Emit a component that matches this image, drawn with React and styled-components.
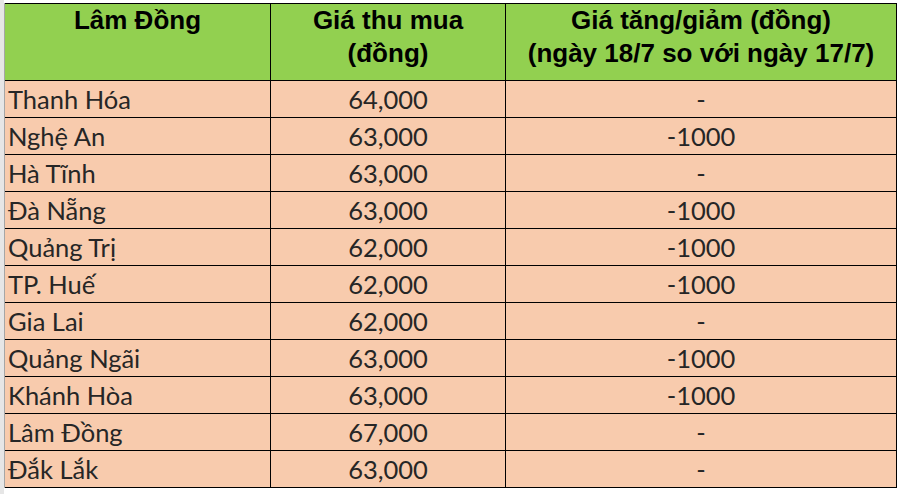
import React from 'react';
import styled, { createGlobalStyle } from 'styled-components';

const Global = createGlobalStyle`
  html, body { margin: 0; padding: 0; background: #fff; }
  body { width: 900px; height: 494px; overflow: hidden; }
`;

const Sheet = styled.div`
  display: flex;
  align-items: flex-start;
  height: 494px;
  background: #fff;
`;

const Gutter = styled.div`
  width: 4px;
  flex: none;
  align-self: stretch;
  background: #e6e6e6;
`;

const Grid = styled.div`
  margin-top: 3px;
  display: grid;
  grid-template-columns: 265px 234px 390px;
  grid-template-rows: 76px repeat(11, 36px);
  gap: 1px;
  padding: 1px 1px 1px 0;
  background: #000;
  border-left: 1px solid #a6a6a6;
`;

const Head = styled.div`
  background: #92d050;
  text-align: center;
  font-family: 'Liberation Sans', Arial, sans-serif;
  font-size: 26px;
  font-weight: 700;
  line-height: 33px;
  color: #000;
  white-space: nowrap;
  overflow: hidden;
`;

const Cell = styled.div`
  display: flex;
  align-items: center;
  justify-content: ${p => (p.$center ? 'center' : 'flex-start')};
  padding: 0 3px;
  background: #f8cbad;
  font-family: Lato, 'Open Sans', sans-serif;
  font-size: 25.5px;
  line-height: 32px;
  color: #262626;
  white-space: nowrap;
  overflow: hidden;
`;

const rows = [
  ['Thanh Hóa', '64,000', '-'],
  ['Nghệ An', '63,000', '-1000'],
  ['Hà Tĩnh', '63,000', '-'],
  ['Đà Nẵng', '63,000', '-1000'],
  ['Quảng Trị', '62,000', '-1000'],
  ['TP. Huế', '62,000', '-1000'],
  ['Gia Lai', '62,000', '-'],
  ['Quảng Ngãi', '63,000', '-1000'],
  ['Khánh Hòa', '63,000', '-1000'],
  ['Lâm Đồng', '67,000', '-'],
  ['Đắk Lắk', '63,000', '-'],
];

export default function App() {
  return (
    <Sheet>
      <Global />
      <Gutter />
      <Grid role="table">
        <Head role="columnheader">Lâm Đồng</Head>
        <Head role="columnheader">Giá thu mua<br />(đồng)</Head>
        <Head role="columnheader">Giá tăng/giảm (đồng)<br />(ngày 18/7 so với ngày 17/7)</Head>
        {rows.map(r => (
          <React.Fragment key={r[0]}>
            <Cell role="cell">{r[0]}</Cell>
            <Cell role="cell" $center>{r[1]}</Cell>
            <Cell role="cell" $center>{r[2]}</Cell>
          </React.Fragment>
        ))}
      </Grid>
    </Sheet>
  );
}
